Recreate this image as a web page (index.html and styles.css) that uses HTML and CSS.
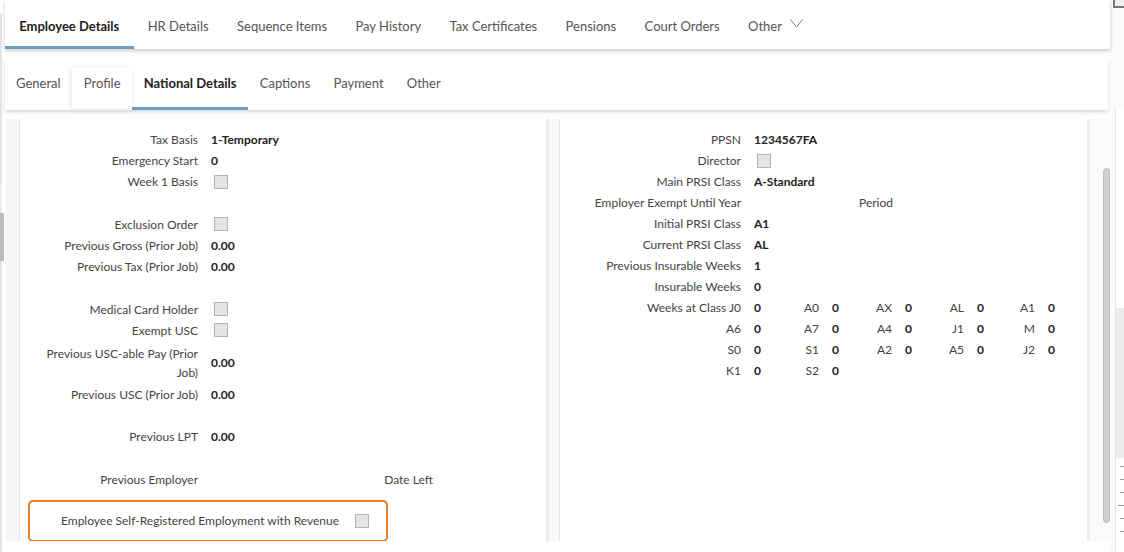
FILE: index.html
```html
<!DOCTYPE html>
<html lang="en">
<head>
<meta charset="utf-8">
<title>Employee Details</title>
<link rel="stylesheet" href="styles.css">
</head>
<body>
<div class="page">
  <div class="gutter">
    <span class="g g1"></span>
    <span class="g g2"></span>
    <span class="g g3"></span>
    <span class="g g4"></span>
  </div>
  <div class="main">
    <nav class="tabs1">
      <span class="tab1 active">Employee Details</span>
      <span class="tab1">HR Details</span>
      <span class="tab1">Sequence Items</span>
      <span class="tab1">Pay History</span>
      <span class="tab1">Tax Certificates</span>
      <span class="tab1">Pensions</span>
      <span class="tab1">Court Orders</span>
      <span class="tab1">Other <svg class="chev" width="13" height="9" viewBox="0 0 13 9"><polyline points="0.5,0.5 6.5,8 12.5,0.5" fill="none" stroke="#777" stroke-width="1"/></svg></span>
    </nav>
    <nav class="tabs2">
      <span class="tab2">General</span>
      <span class="tab2 raised">Profile</span>
      <span class="tab2 active">National Details</span>
      <span class="tab2">Captions</span>
      <span class="tab2">Payment</span>
      <span class="tab2">Other</span>
    </nav>
    <div class="content">
      <div class="lstrip"></div>
      <section class="panel pleft">
        <div class="lgrid">
          <span class="lbl">Tax Basis</span><span class="val span3">1-Temporary</span>
          <span class="lbl">Emergency Start</span><span class="val span3">0</span>
          <span class="lbl">Week 1 Basis</span><span class="val span3"><i class="cb"></i></span>
          <span class="blank"></span>
          <span class="lbl">Exclusion Order</span><span class="val span3"><i class="cb"></i></span>
          <span class="lbl">Previous Gross (Prior Job)</span><span class="val span3">0.00</span>
          <span class="lbl">Previous Tax (Prior Job)</span><span class="val span3">0.00</span>
          <span class="blank"></span>
          <span class="lbl">Medical Card Holder</span><span class="val span3"><i class="cb"></i></span>
          <span class="lbl">Exempt USC</span><span class="val span3"><i class="cb"></i></span>
          <span class="lbl wrap"><span class="wraptext">Previous USC-able Pay (Prior Job)</span></span><span class="val span3 tall">0.00</span>
          <span class="lbl">Previous USC (Prior Job)</span><span class="val span3">0.00</span>
          <span class="blank"></span>
          <span class="lbl">Previous LPT</span><span class="val span3">0.00</span>
          <span class="blank"></span>
          <span class="lbl">Previous Employer</span><span class="val"></span><span class="lbl">Date Left</span><span class="val"></span>
        </div>
        <div class="selfreg">
          <span class="selflbl">Employee Self-Registered Employment with Revenue</span>
          <i class="cb"></i>
        </div>
      </section>
      <div class="divider"></div>
      <section class="panel pright">
        <div class="rgrid">
          <span class="lbl">PPSN</span><span class="val span9">1234567FA</span>
          <span class="lbl">Director</span><span class="val span9"><i class="cb"></i></span>
          <span class="lbl">Main PRSI Class</span><span class="val span9">A-Standard</span>
          <span class="lbl">Employer Exempt Until Year</span><span class="val span3"></span><span class="lbl">Period</span><span class="val span5"></span>
          <span class="lbl">Initial PRSI Class</span><span class="val span9">A1</span>
          <span class="lbl">Current PRSI Class</span><span class="val span9">AL</span>
          <span class="lbl">Previous Insurable Weeks</span><span class="val span9">1</span>
          <span class="lbl">Insurable Weeks</span><span class="val span9">0</span>

          <span class="lbl">Weeks at Class J0</span><span class="val">0</span>
          <span class="lbl">A0</span><span class="val">0</span>
          <span class="lbl">AX</span><span class="val">0</span>
          <span class="lbl">AL</span><span class="val">0</span>
          <span class="lbl">A1</span><span class="val">0</span>

          <span class="lbl">A6</span><span class="val">0</span>
          <span class="lbl">A7</span><span class="val">0</span>
          <span class="lbl">A4</span><span class="val">0</span>
          <span class="lbl">J1</span><span class="val">0</span>
          <span class="lbl">M</span><span class="val">0</span>

          <span class="lbl">S0</span><span class="val">0</span>
          <span class="lbl">S1</span><span class="val">0</span>
          <span class="lbl">A2</span><span class="val">0</span>
          <span class="lbl">A5</span><span class="val">0</span>
          <span class="lbl">J2</span><span class="val">0</span>

          <span class="lbl">K1</span><span class="val">0</span>
          <span class="lbl">S2</span><span class="val span7">0</span>
        </div>
      </section>
      <div class="scroll"><div class="thumb"></div></div>
    </div>
  </div>
  <div class="rail">
    <div class="corner"></div>
    <div class="railpanel">
      <div class="railtop"></div>
      <div class="railgray">
        <i class="tick"></i><i class="tick"></i><i class="tick"></i><i class="tick big"></i><i class="tick"></i><i class="tick"></i><i class="tick"></i><i class="tick big"></i><i class="tick"></i><i class="tick"></i><i class="tick"></i>
      </div>
      <div class="railbottom">
        <i class="tick"></i><i class="tick"></i><i class="tick"></i><i class="tick big"></i><i class="tick"></i><i class="tick"></i>
      </div>
    </div>
  </div>
</div>
</body>
</html>
```

FILE: styles.css
```css
* { box-sizing: border-box; }
html, body { margin: 0; padding: 0; background: #fff; }
body {
  font-family: Lato, "Open Sans", "Liberation Sans", sans-serif;
  font-size: 12px;
  color: #444;
}
.page {
  display: flex;
  width: 1124px;
  height: 552px;
  overflow: hidden;
}

/* left gutter */
.gutter {
  width: 5px;
  flex: none;
  display: flex;
  flex-direction: column;
}
.g { display: block; }
.g1 { margin-top: 13px; height: 169px; width: 2px; background: #e3e3e3; }
.g2 { height: 31px; width: 2px; background: #ececec; }
.g3 { height: 48px; width: 4px; background: #bcbcbc; }
.g4 { flex: 1; width: 2px; background: #e3e3e3; }

.main {
  width: 1105px;
  flex: none;
  display: flex;
  flex-direction: column;
}

/* top tabs */
.tabs1 {
  height: 49px;
  background: #fff;
  display: flex;
  align-items: stretch;
  box-shadow: 0 2px 4px rgba(0, 0, 0, 0.2);
  position: relative;
  z-index: 2;
}
.tab1 {
  display: flex;
  align-items: center;
  padding: 5px 14.2px 0;
  font-size: 13px;
  color: #555;
  border-bottom: 3px solid transparent;
  white-space: nowrap;
}
.tab1.active {
  color: #222;
  font-weight: 700;
  border-bottom-color: #6b9fc2;
}
.chev { margin-left: 8px; margin-top: -5px; }

/* second tabs */
.tabs2 {
  margin-top: 9px;
  width: 1103px;
  height: 52px;
  background: #fff;
  display: flex;
  box-shadow: 0 2px 4px rgba(0, 0, 0, 0.16);
  position: relative;
  z-index: 2;
}
.tab2 {
  display: flex;
  align-items: center;
  padding: 0 11.6px;
  font-size: 13px;
  color: #555;
  border-bottom: 3px solid transparent;
  white-space: nowrap;
}
.tab2:first-child { padding-left: 11px; }
.tab2.raised {
  margin-top: 10px;
  margin-bottom: 2px;
  padding-bottom: 10px;
  box-shadow: -1px 1px 5px rgba(0, 0, 0, 0.1);
  border-bottom: 0;
}
.tab2.active {
  color: #222;
  font-weight: 700;
  border-bottom-color: #6b9fc2;
}

/* content */
.content {
  margin-top: 9px;
  height: 422px;
  display: flex;
}
.lstrip {
  width: 15px;
  flex: none;
  background: #f6f6f6;
  border-right: 1px solid #e3e3e3;
}
.panel {
  background: #fff;
  padding-top: 10px;
  overflow: hidden;
}
.pleft { width: 526px; flex: none; }
.divider {
  width: 14px;
  flex: none;
  background: #f9f9f9;
  border-left: 3px solid #ebebeb;
  border-right: 1px solid #e5e5e5;
}
.pright { width: 527px; flex: none; }

.lbl, .val {
  height: 21px;
  line-height: 21px;
  white-space: nowrap;
}
.lgrid .lbl, .lgrid .val { height: 21.2px; line-height: 21.2px; }
.lbl { text-align: right; color: #444; }
.val {
  padding-left: 13px;
  color: #222;
  font-weight: 700;
  display: flex;
  align-items: center;
}
.blank { grid-column: 1 / -1; height: 21px; }
.lgrid .blank { height: 21.2px; }
.span3 { grid-column: span 3; }
.span5 { grid-column: span 5; }
.span7 { grid-column: span 7; }
.span9 { grid-column: span 9; }

.lgrid {
  display: grid;
  grid-template-columns: 178px 120px 115px 1fr;
}
.lgrid .lbl.wrap {
  height: 43px;
  white-space: normal;
  line-height: 19px;
  padding: 3px 0 2px 20px;
}
.wraptext { display: block; }
.lgrid .val.tall { height: 43px; }

.rgrid {
  display: grid;
  grid-template-columns: 181px 40px 38px 40px 33px 40px 32px 40px 31px 40px;
}

.cb {
  display: block;
  width: 14px;
  height: 14px;
  margin-left: 3px;
  background: #e4e4e4;
  border: 1px solid #b3b3b3;
}

.selfreg {
  margin: 10px 0 0 8px;
  width: 360px;
  height: 42px;
  border: 2px solid #f07a2c;
  border-radius: 5px;
  display: flex;
  align-items: center;
  padding-left: 31px;
}
.selflbl { color: #444; }
.selfreg .cb { margin-left: 16px; }

.scroll {
  width: 23px;
  flex: none;
  background: #fafafa;
  border-left: 3px solid #eeeeee;
  display: flex;
  justify-content: flex-end;
  padding-top: 49px;
  padding-bottom: 18px;
}
.thumb {
  width: 7px;
  border-radius: 4px;
  background: #cfcfcf;
  border: 1px solid #bdbdbd;
}

/* right rail */
.rail {
  width: 14px;
  flex: none;
  background: #fbfbfb;
  display: flex;
  flex-direction: column;
}
.corner {
  margin-left: 3px;
  width: 11px;
  height: 8px;
  border-left: 2px solid #777;
  border-bottom: 2px solid #777;
  background: #f2f2f2;
}
.railpanel {
  margin: 100px 0 0 5px;
  flex: 1;
  border-left: 1px solid #e4e4e4;
  display: flex;
  flex-direction: column;
  background: #fff;
}
.railtop { height: 200px; }
.railgray {
  height: 150px;
  background: #ececec;
  display: flex;
  flex-direction: column;
  align-items: flex-end;
  gap: 12px;
  padding-top: 36px;
}
.railbottom {
  flex: 1;
  display: flex;
  flex-direction: column;
  align-items: flex-end;
  gap: 12px;
  padding-top: 8px;
}
.tick {
  display: block;
  width: 4px;
  height: 1px;
  background: #999;
}
.tick.big { width: 6px; }
```
